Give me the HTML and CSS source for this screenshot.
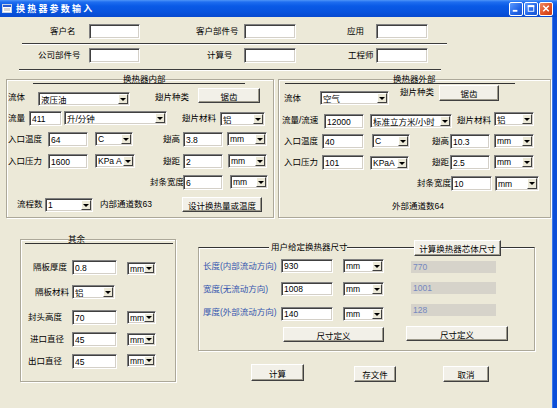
FILE: index.html
```html
<!DOCTYPE html>
<html lang="zh-CN">
<head>
    <meta charset="UTF-8">
    <title>换热器参数输入</title>
    <link rel="stylesheet" href="styles.css">
</head>
<body>
<div class="window">
    <div class="titlebar">
        <svg class="app-icon" width="10" height="9" viewBox="0 0 10 9">
            <rect x="0.5" y="0.5" width="9" height="8" fill="#fff" stroke="#c8d4e8"/>
            <rect x="1" y="1" width="8" height="2" fill="#2a5bd0"/>
            <rect x="2" y="4" width="6" height="3" fill="#d8d8d8"/>
        </svg>
        <span class="title-text">换热器参数输入</span>
        <div class="title-buttons">
            <span class="tbtn"><svg width="13" height="13" viewBox="0 0 13 13"><rect x="3" y="8" width="5" height="2" fill="#fff"/></svg></span>
            <span class="tbtn"><svg width="13" height="13" viewBox="0 0 13 13"><rect x="3.5" y="3.5" width="6" height="6" fill="none" stroke="#fff"/><rect x="3" y="3" width="7" height="2" fill="#fff"/></svg></span>
            <span class="tbtn tbtn-close"><svg width="13" height="13" viewBox="0 0 13 13"><path d="M3.5 3.5 L9.5 9.5 M9.5 3.5 L3.5 9.5" stroke="#fff" stroke-width="1.6"/></svg></span>
        </div>
    </div>

    <div class="client">
        <!-- 顶部信息 -->
        <div class="row mt7">
            <span class="lbl ml50 w39">客户名</span><input class="tb w51">
            <span class="lbl ml56 w48">客户部件号</span><input class="tb w52">
            <span class="lbl ml51 w29">应用</span><input class="tb w52">
        </div>
        <div class="sep sep-top"></div>
        <div class="row mt4">
            <span class="lbl ml38 w51">公司部件号</span><input class="tb w51">
            <span class="lbl ml67 w37">计算号</span><input class="tb w52">
            <span class="lbl ml52 w28">工程师</span><input class="tb w52">
        </div>
        <div class="sep sep-bottom"></div>

        <div class="groups">
            <!-- 换热器内部 -->
            <div class="grp grp-in">
                <div class="grp-head head-in">换热器内部</div>
                <div class="row mt4">
                    <span class="lbl ml1 w30 mt2">流体</span>
                    <div class="cb w92 mt4"><span class="cb-text">液压油</span><span class="cb-arrow"></span></div>
                    <span class="lbl ml25 w43 mt2">翅片种类</span>
                    <button class="btn w62">锯齿</button>
                </div>
                <div class="row mt5">
                    <span class="lbl ml1 w21">流量</span><input class="tb w33" value="411">
                    <div class="cb ml2 w103"><span class="cb-text">升/分钟</span><span class="cb-arrow"></span></div>
                    <span class="lbl ml15 w38">翅片材料</span>
                    <div class="cb w45 mt1"><span class="cb-text">铝</span><span class="cb-arrow"></span></div>
                </div>
                <div class="row mt6">
                    <span class="lbl ml1 w40">入口温度</span><input class="tb w40" value="64">
                    <div class="cb ml7 w38"><span class="cb-text">C</span><span class="cb-arrow"></span></div>
                    <span class="lbl ml30 w20">翅高</span><input class="tb w40" value="3.8">
                    <div class="cb ml4 w40"><span class="cb-text">mm</span><span class="cb-arrow"></span></div>
                </div>
                <div class="row mt7">
                    <span class="lbl ml1 w40">入口压力</span><input class="tb w40" value="1600">
                    <div class="cb ml7 w40"><span class="cb-text">KPa A</span><span class="cb-arrow"></span></div>
                    <span class="lbl ml28 w20">翅距</span><input class="tb w40" value="2">
                    <div class="cb ml5 w39"><span class="cb-text">mm</span><span class="cb-arrow"></span></div>
                </div>
                <div class="row mt6">
                    <span class="lbl ml143 w33">封条宽度</span><input class="tb w40" value="6">
                    <div class="cb ml7 w38"><span class="cb-text">mm</span><span class="cb-arrow"></span></div>
                </div>
                <div class="row mt7">
                    <span class="lbl ml10 w28">流程数</span>
                    <div class="cb w48 mt1"><span class="cb-text">1</span><span class="cb-arrow"></span></div>
                    <span class="lbl ml7 w82">内部通道数63</span>
                    <button class="btn w80">设计换热量或温度</button>
                </div>
            </div>

            <!-- 换热器外部 -->
            <div class="grp grp-out">
                <div class="grp-head head-out">换热器外部</div>
                <div class="row mt1">
                    <span class="lbl ml5 w36 mt6">流体</span>
                    <div class="cb w69 mt6"><span class="cb-text">空气</span><span class="cb-arrow"></span></div>
                    <span class="lbl ml11 w39">翅片种类</span>
                    <button class="btn w60 h16">锯齿</button>
                </div>
                <div class="row mt6">
                    <span class="lbl ml3 w42 mt1">流量/流速</span><input class="tb w40 mt2" value="12000">
                    <div class="cb ml6 w82 mt2"><span class="cb-text">标准立方米/小时</span><span class="cb-arrow"></span></div>
                    <span class="lbl ml5 w37 mt1">翅片材料</span>
                    <div class="cb w40"><span class="cb-text">铝</span><span class="cb-arrow"></span></div>
                </div>
                <div class="row mt5">
                    <span class="lbl ml5 w38">入口温度</span><input class="tb w42" value="40">
                    <div class="cb ml8 w38"><span class="cb-text">C</span><span class="cb-arrow"></span></div>
                    <span class="lbl ml22 w18">翅高</span><input class="tb w40" value="10.3">
                    <div class="cb ml4 w40"><span class="cb-text">mm</span><span class="cb-arrow"></span></div>
                </div>
                <div class="row mt6">
                    <span class="lbl ml5 w38">入口压力</span><input class="tb w42" value="101">
                    <div class="cb ml6 w39 mt1"><span class="cb-text">KPaA</span><span class="cb-arrow"></span></div>
                    <span class="lbl ml23 w18">翅距</span><input class="tb w40" value="2.5">
                    <div class="cb ml4 w40"><span class="cb-text">mm</span><span class="cb-arrow"></span></div>
                </div>
                <div class="row mt6">
                    <span class="lbl ml138 w34">封条宽度</span><input class="tb w41" value="10">
                    <div class="cb ml3 w44 h15"><span class="cb-text">mm</span><span class="cb-arrow"></span></div>
                </div>
                <div class="row mt8">
                    <span class="lbl ml113">外部通道数64</span>
                </div>
            </div>
        </div>

        <div class="lower">
            <!-- 其余 -->
            <div class="grp grp-misc">
                <div class="grp-head head-misc">其余</div>
                <div class="row mt16">
                    <span class="lbl ml12 w39">隔板厚度</span><input class="tb w45" value="0.8">
                    <div class="cb cb-sm ml10 w29 mt2"><span class="cb-text">mm</span><span class="cb-arrow"></span></div>
                </div>
                <div class="row mt10">
                    <span class="lbl ml14 w37">隔板材料</span>
                    <div class="cb w43"><span class="cb-text">铝</span><span class="cb-arrow"></span></div>
                </div>
                <div class="row mt10">
                    <span class="lbl ml7 w44">封头高度</span><input class="tb w45" value="70">
                    <div class="cb cb-sm ml10 w29 mt1"><span class="cb-text">mm</span><span class="cb-arrow"></span></div>
                </div>
                <div class="row mt7">
                    <span class="lbl ml9 w42">进口直径</span><input class="tb w45" value="45">
                    <div class="cb cb-sm ml10 w29 mt1"><span class="cb-text">mm</span><span class="cb-arrow"></span></div>
                </div>
                <div class="row mt7">
                    <span class="lbl ml7 w44">出口直径</span><input class="tb w45" value="45">
                    <div class="cb cb-sm ml10 w29"><span class="cb-text">mm</span><span class="cb-arrow"></span></div>
                </div>
            </div>

            <div class="lower-right">
                <!-- 用户给定换热器尺寸 -->
                <div class="grp grp-size">
                    <div class="size-head">
                        <span class="size-title">用户给定换热器尺寸</span>
                        <button class="btn ml67 w87 h16">计算换热器芯体尺寸</button>
                    </div>
                    <div class="row mt3">
                        <span class="lbl lbl-blue ml4 w78">长度(内部流动方向)</span><input class="tb tb-s w52" value="930">
                        <div class="cb ml10 w41"><span class="cb-text">mm</span><span class="cb-arrow"></span></div>
                        <div class="ro ml27 w85 mt2">770</div>
                    </div>
                    <div class="row mt9">
                        <span class="lbl lbl-blue ml4 w78">宽度(无流动方向)</span><input class="tb tb-s w52" value="1008">
                        <div class="cb ml10 w41"><span class="cb-text">mm</span><span class="cb-arrow"></span></div>
                        <div class="ro ml27 w85">1001</div>
                    </div>
                    <div class="row mt8">
                        <span class="lbl lbl-blue ml4 w78 mt1">厚度(外部流动方向)</span><input class="tb tb-s w52 mt3" value="140">
                        <div class="cb ml10 w41 mt3"><span class="cb-text">mm</span><span class="cb-arrow"></span></div>
                        <div class="ro ml27 w85">128</div>
                    </div>
                    <div class="row mt5">
                        <button class="btn ml84 w101 mt1">尺寸定义</button>
                        <button class="btn ml22 w102">尺寸定义</button>
                    </div>
                </div>

                <div class="actions">
                    <button class="btn ml53 w53 h17">计算</button>
                    <button class="btn ml50 w42 h16 mt2">存文件</button>
                    <button class="btn ml47 w46 h16 mt2">取消</button>
                </div>
            </div>
        </div>
    </div>
</div>
</body>
</html>
```

FILE: styles.css
```css
* {
    box-sizing: border-box;
}

body {
    margin: 0;
    background: #ECE9D8;
    font-family: "Liberation Sans", "Noto Sans CJK SC", sans-serif;
    font-size: 8.5px;
    color: #000000;
}

.window {
    width: 557px;
    height: 408px;
    overflow: hidden;
    display: flex;
    flex-direction: column;
    background: #ECE9D8;
}

/* タイトルバー */
.titlebar {
    height: 17px;
    flex-shrink: 0;
    display: flex;
    align-items: center;
    padding-left: 2px;
    color: #FFFFFF;
    background: linear-gradient(#4f95f7 0, #1f6ef0 2px, #0a5ae6 6px, #0853de 12px, #0749cf 17px);
}

.app-icon {
    flex-shrink: 0;
}

.title-text {
    margin-left: 4px;
    font-size: 9px;
    font-weight: bold;
    letter-spacing: 2.2px;
    white-space: nowrap;
}

.title-buttons {
    margin-left: auto;
    display: flex;
    gap: 1px;
    padding-right: 4px;
}

.tbtn {
    width: 14px;
    height: 14px;
    display: flex;
    align-items: center;
    justify-content: center;
    border: 1px solid #FFFFFF;
    border-radius: 2px;
    background: linear-gradient(135deg, #5c9bff, #2063e6 60%, #1b55d0);
}

.tbtn-close {
    background: linear-gradient(135deg, #f08a62, #df4e22 60%, #c83c14);
}

.client {
    flex: 1;
    border-right: 4px solid #0b4ed8;
    box-shadow: inset -1px 0 0 #3c78ea;
}

/* 行と部品 */
.row {
    display: flex;
    align-items: flex-start;
}

.lbl {
    height: 15px;
    line-height: 15px;
    white-space: nowrap;
    flex-shrink: 0;
}

.lbl-blue {
    height: 14px;
    line-height: 14px;
    color: #3556ae;
}

.tb {
    height: 15px;
    margin: 0;
    padding: 0 0 0 2px;
    flex-shrink: 0;
    font: inherit;
    color: #000000;
    background: #FFFFFF;
    border: 1px solid;
    border-color: #808080 #FFFFFF #FFFFFF #808080;
    box-shadow: inset 1px 1px 0 #404040, inset -1px -1px 0 #d4d0c8;
    outline: none;
}

.tb-s {
    height: 14px;
}

.cb {
    height: 14px;
    display: flex;
    align-items: center;
    flex-shrink: 0;
    padding-left: 2px;
    background: #FFFFFF;
    border: 1px solid;
    border-color: #808080 #FFFFFF #FFFFFF #808080;
    box-shadow: inset 1px 1px 0 #404040, inset -1px -1px 0 #d4d0c8;
}

.cb-sm {
    height: 13px;
}

.cb-text {
    flex: 1;
    white-space: nowrap;
    overflow: hidden;
}

.cb-arrow {
    width: 10px;
    height: calc(100% - 2px);
    margin-right: 1px;
    display: flex;
    align-items: center;
    justify-content: center;
    background: #ECE9D8;
    border: 1px solid;
    border-color: #FFFFFF #404040 #404040 #FFFFFF;
}

.cb-arrow::after {
    content: "";
    border-left: 3px solid transparent;
    border-right: 3px solid transparent;
    border-top: 3px solid #000000;
}

.btn {
    height: 15px;
    margin: 0;
    padding: 0;
    flex-shrink: 0;
    font: inherit;
    color: #000000;
    text-align: center;
    white-space: nowrap;
    background: #f2f0e8;
    border: 1px solid;
    border-color: #FFFFFF #404040 #404040 #FFFFFF;
    box-shadow: inset -1px -1px 0 #9d9a8c;
}

.ro {
    height: 12px;
    line-height: 12px;
    padding-left: 2px;
    flex-shrink: 0;
    color: #7588bf;
    background: #d6d3ca;
}

/* 区切り線 */
.sep {
    height: 0;
    border-top: 1px solid #3c3c3c;
    box-shadow: 0 1px 0 #FFFFFF;
}

.sep-top {
    margin: 4px 0 0 22px;
    width: 425px;
}

.sep-bottom {
    margin: 6px 0 0 19px;
    width: 422px;
}

/* グループ枠 */
.grp {
    flex-shrink: 0;
    border: 1px solid #aca899;
    box-shadow: inset 1px 1px 0 #FFFFFF, 1px 1px 0 #FFFFFF;
}

.grp-head {
    height: 9px;
    margin-top: -5px;
    line-height: 9px;
    white-space: nowrap;
    border-bottom: 1px solid #333333;
}

.groups {
    display: flex;
    margin-top: 9px;
    padding-left: 6px;
}

.grp-in {
    width: 268px;
    height: 139px;
}

.head-in {
    margin-left: 26px;
    width: 212px;
    padding-left: 90px;
}

.grp-out {
    width: 273px;
    height: 139px;
    margin-left: 4px;
}

.head-out {
    margin-left: 6px;
    width: 230px;
    padding-left: 108px;
}

.lower {
    display: flex;
    margin-top: 21px;
    padding-left: 20px;
}

.grp-misc {
    width: 156px;
    height: 143px;
}

.head-misc {
    margin-left: 4px;
    width: 148px;
    padding-left: 43px;
}

.lower-right {
    margin-left: 22px;
    display: flex;
    flex-direction: column;
}

.grp-size {
    margin-top: 8px;
    width: 337px;
    height: 104px;
    border-top-color: #333333;
}

.size-head {
    display: flex;
    height: 16px;
    margin-top: -8px;
}

.size-title {
    margin-left: 70px;
    width: 78px;
    padding: 0 2px;
    line-height: 15px;
    white-space: nowrap;
    background: #ECE9D8;
}

.actions {
    display: flex;
    align-items: flex-start;
    margin-top: 13px;
}

/* 寸法 */
.h15 { height: 15px; }
.h16 { height: 16px; }
.h17 { height: 17px; }

.mt1 { margin-top: 1px; }
.mt2 { margin-top: 2px; }
.mt3 { margin-top: 3px; }
.mt4 { margin-top: 4px; }
.mt5 { margin-top: 5px; }
.mt6 { margin-top: 6px; }
.mt7 { margin-top: 7px; }
.mt8 { margin-top: 8px; }
.mt9 { margin-top: 9px; }
.mt10 { margin-top: 10px; }
.mt16 { margin-top: 16px; }

.ml1 { margin-left: 1px; }
.ml2 { margin-left: 2px; }
.ml3 { margin-left: 3px; }
.ml4 { margin-left: 4px; }
.ml5 { margin-left: 5px; }
.ml6 { margin-left: 6px; }
.ml7 { margin-left: 7px; }
.ml8 { margin-left: 8px; }
.ml9 { margin-left: 9px; }
.ml10 { margin-left: 10px; }
.ml11 { margin-left: 11px; }
.ml12 { margin-left: 12px; }
.ml14 { margin-left: 14px; }
.ml15 { margin-left: 15px; }
.ml22 { margin-left: 22px; }
.ml23 { margin-left: 23px; }
.ml25 { margin-left: 25px; }
.ml27 { margin-left: 27px; }
.ml28 { margin-left: 28px; }
.ml30 { margin-left: 30px; }
.ml38 { margin-left: 38px; }
.ml47 { margin-left: 47px; }
.ml50 { margin-left: 50px; }
.ml51 { margin-left: 51px; }
.ml52 { margin-left: 52px; }
.ml53 { margin-left: 53px; }
.ml56 { margin-left: 56px; }
.ml67 { margin-left: 67px; }
.ml84 { margin-left: 84px; }
.ml113 { margin-left: 113px; }
.ml138 { margin-left: 138px; }
.ml143 { margin-left: 143px; }

.w18 { width: 18px; }
.w20 { width: 20px; }
.w21 { width: 21px; }
.w28 { width: 28px; }
.w29 { width: 29px; }
.w30 { width: 30px; }
.w33 { width: 33px; }
.w34 { width: 34px; }
.w36 { width: 36px; }
.w37 { width: 37px; }
.w38 { width: 38px; }
.w39 { width: 39px; }
.w40 { width: 40px; }
.w41 { width: 41px; }
.w42 { width: 42px; }
.w43 { width: 43px; }
.w44 { width: 44px; }
.w45 { width: 45px; }
.w46 { width: 46px; }
.w48 { width: 48px; }
.w51 { width: 51px; }
.w52 { width: 52px; }
.w53 { width: 53px; }
.w60 { width: 60px; }
.w62 { width: 62px; }
.w69 { width: 69px; }
.w78 { width: 78px; }
.w80 { width: 80px; }
.w82 { width: 82px; }
.w85 { width: 85px; }
.w87 { width: 87px; }
.w92 { width: 92px; }
.w101 { width: 101px; }
.w102 { width: 102px; }
.w103 { width: 103px; }
```
